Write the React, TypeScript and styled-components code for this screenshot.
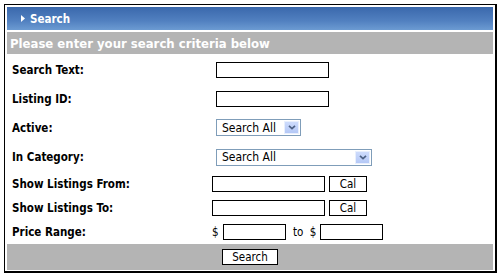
import React from "react";
import styled, { createGlobalStyle } from "styled-components";

const Global = createGlobalStyle`
  html, body { margin: 0; padding: 0; background: #fff; }
  body { font-family: "DejaVu Sans Condensed", "DejaVu Sans", sans-serif; }
`;

const FONT = `"DejaVu Sans Condensed", "DejaVu Sans", sans-serif`;

const Panel = styled.div`
  box-sizing: border-box;
  margin: 4px 0 0 4px;
  width: 493px;
  border: 1px solid #000;
  border-right-width: 2px;
  border-bottom-width: 2px;
  padding: 2px 2px 1px 2px;
  background: #fff;
`;

const Header = styled.div`
  height: 23px;
  display: flex;
  align-items: center;
  gap: 5px;
  padding-left: 14px;
  background: linear-gradient(#3a68ac, #5180c0 60%, #6c9bd2);
  color: #fff;
  font: bold 11.5px ${FONT};
`;

const Arrow = styled.svg`
  width: 4px;
  height: 7px;
  display: block;
`;

const Intro = styled.div`
  margin-top: 2px;
  height: 22px;
  display: flex;
  align-items: center;
  padding-left: 3px;
  background: #b4b4b4;
  color: #fff;
  font: bold 13px ${FONT};
`;

const Form = styled.div`
  display: grid;
  grid-template-columns: 205px 1fr;
  grid-template-rows: 28px 29px 29px 30px 24px 24px 24px;
  padding-top: 2px;
  align-items: center;
`;

const Label = styled.div`
  padding-left: 5px;
  font: bold 11.5px ${FONT};
  color: #000;
`;

const Field = styled.div<{ $indent?: number }>`
  display: flex;
  align-items: center;
  gap: 4px;
  padding-left: ${(p) => p.$indent ?? 0}px;
  font: 11.5px ${FONT};
  color: #000;
`;

const TextBox = styled.div<{ $w: number }>`
  box-sizing: border-box;
  width: ${(p) => p.$w}px;
  height: 16px;
  border: 1px solid #000;
  background: #fff;
`;

const Select = styled.div<{ $w: number }>`
  box-sizing: border-box;
  width: ${(p) => p.$w}px;
  height: 17px;
  border: 1px solid #7f9db9;
  background: #fff;
  padding: 1px 1px 1px 5px;
  display: flex;
  align-items: center;
  justify-content: space-between;
  font: 12px ${FONT};
  color: #000;
`;

const DropBtn = styled.div`
  box-sizing: border-box;
  width: 15px;
  height: 13px;
  border: 1px solid #e8effd;
  background: linear-gradient(#cddbfc, #b4c8f6);
  display: flex;
  align-items: center;
  justify-content: center;
`;

const Button = styled.div<{ $w: number }>`
  box-sizing: border-box;
  width: ${(p) => p.$w}px;
  height: 16px;
  border: 1px solid #000;
  background: #fff;
  display: flex;
  align-items: center;
  justify-content: center;
  font: 11.5px ${FONT};
  color: #000;
`;

const Footer = styled.div`
  height: 26px;
  background: #b4b4b4;
  display: flex;
  align-items: center;
  justify-content: center;
`;

const Chevron = () => (
  <svg width="8" height="5" viewBox="0 0 8 5">
    <path d="M1 0.8 L4 3.6 L7 0.8" fill="none" stroke="#4d6185" strokeWidth="1.7" />
  </svg>
);

export default function App() {
  return (
    <>
      <Global />
      <Panel>
        <Header>
          <Arrow viewBox="0 0 4 7">
            <path d="M0 0 L4 3.5 L0 7 Z" fill="#fff" />
          </Arrow>
          Search
        </Header>
        <Intro>Please enter your search criteria below</Intro>
        <Form>
          <Label>Search Text:</Label>
          <Field $indent={4}><TextBox $w={113} /></Field>
          <Label>Listing ID:</Label>
          <Field $indent={4}><TextBox $w={113} /></Field>
          <Label>Active:</Label>
          <Field $indent={4}>
            <Select $w={85}>Search All<DropBtn><Chevron /></DropBtn></Select>
          </Field>
          <Label>In Category:</Label>
          <Field $indent={4}>
            <Select $w={156}>Search All<DropBtn><Chevron /></DropBtn></Select>
          </Field>
          <Label>Show Listings From:</Label>
          <Field>
            <TextBox $w={113} />
            <Button $w={38}>Cal</Button>
          </Field>
          <Label>Show Listings To:</Label>
          <Field>
            <TextBox $w={113} />
            <Button $w={38}>Cal</Button>
          </Field>
          <Label>Price Range:</Label>
          <Field>
            $<TextBox $w={63} />&nbsp;to&nbsp; $<TextBox $w={63} />
          </Field>
        </Form>
        <Footer>
          <Button $w={56}>Search</Button>
        </Footer>
      </Panel>
    </>
  );
}
